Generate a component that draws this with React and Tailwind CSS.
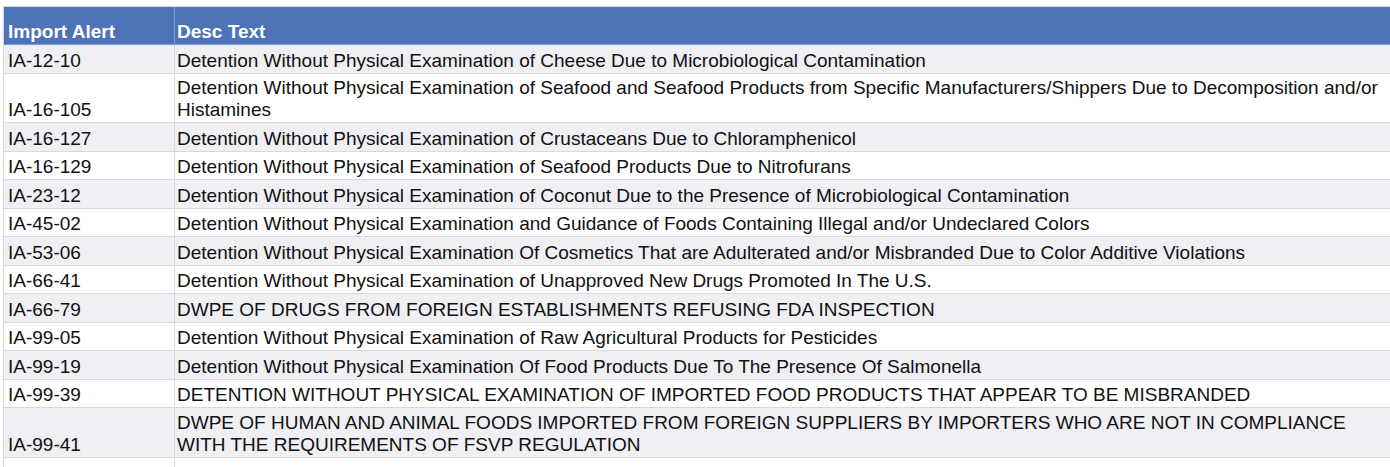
import React from 'react';

// Import alert list — spreadsheet-style table export
const ROWS = [
  { id: 'IA-12-10', desc: ['Detention Without Physical Examination of Cheese Due to Microbiological Contamination'] },
  {
    id: 'IA-16-105',
    desc: [
      'Detention Without Physical Examination of Seafood and Seafood Products from Specific Manufacturers/Shippers Due to Decomposition and/or',
      'Histamines',
    ],
  },
  { id: 'IA-16-127', desc: ['Detention Without Physical Examination of Crustaceans Due to Chloramphenicol'] },
  { id: 'IA-16-129', desc: ['Detention Without Physical Examination of Seafood Products Due to Nitrofurans'] },
  { id: 'IA-23-12', desc: ['Detention Without Physical Examination of Coconut Due to the Presence of Microbiological Contamination'] },
  { id: 'IA-45-02', desc: ['Detention Without Physical Examination and Guidance of Foods Containing Illegal and/or Undeclared Colors'] },
  { id: 'IA-53-06', desc: ['Detention Without Physical Examination Of Cosmetics That are Adulterated and/or Misbranded Due to Color Additive Violations'] },
  { id: 'IA-66-41', desc: ['Detention Without Physical Examination of Unapproved New Drugs Promoted In The U.S.'] },
  { id: 'IA-66-79', desc: ['DWPE OF DRUGS FROM FOREIGN ESTABLISHMENTS REFUSING FDA INSPECTION'] },
  { id: 'IA-99-05', desc: ['Detention Without Physical Examination of Raw Agricultural Products for Pesticides'] },
  { id: 'IA-99-19', desc: ['Detention Without Physical Examination Of Food Products Due To The Presence Of Salmonella'] },
  { id: 'IA-99-39', desc: ['DETENTION WITHOUT PHYSICAL EXAMINATION OF IMPORTED FOOD PRODUCTS THAT APPEAR TO BE MISBRANDED'] },
  {
    id: 'IA-99-41',
    desc: [
      'DWPE OF HUMAN AND ANIMAL FOODS IMPORTED FROM FOREIGN SUPPLIERS BY IMPORTERS WHO ARE NOT IN COMPLIANCE',
      'WITH THE REQUIREMENTS OF FSVP REGULATION',
    ],
  },
];

export default function App() {
  return (
    <div
      className="w-[1390px] h-[467px] overflow-hidden bg-white pt-[6px] pl-[3px] text-[19px] leading-[22px] text-[#111]"
      style={{ fontFamily: '"Liberation Sans", Arial, sans-serif' }}
    >
      <div className="w-[1400px] border-l border-t border-[#d6d6de]">
        {/* header */}
        <div className="flex h-[38px] bg-[#4e73b9] border-b border-[#7f9bcf] text-white font-bold">
          <div className="w-[171px] shrink-0 flex items-end pl-[4px] pb-[1px] border-r border-[#7f9bcf]">Import Alert</div>
          <div className="flex-1 flex items-end pl-[2px] pb-[1px]">Desc Text</div>
        </div>

        {ROWS.map((r, i) => (
          <div
            key={r.id}
            className={`flex border-b border-[#d8d8e0] ${i % 2 === 0 ? 'bg-[#efeff4]' : 'bg-white'} ${r.desc.length > 1 ? 'h-[49.5px]' : 'h-[28.5px]'}`}
          >
            <div className="w-[171px] shrink-0 flex items-end pl-[4px] pb-[1px] border-r border-[#d8d8e0] whitespace-nowrap">
              {r.id}
            </div>
            <div className="flex-1 flex flex-col justify-end pl-[2px] pb-[1px] whitespace-nowrap">
              {r.desc.map((line) => (
                <div key={line}>{line}</div>
              ))}
            </div>
          </div>
        ))}

        {/* empty trailing row */}
        <div className="flex h-[20px]">
          <div className="w-[171px] shrink-0 border-r border-[#d8d8e0]" />
          <div className="flex-1" />
        </div>
      </div>
    </div>
  );
}
